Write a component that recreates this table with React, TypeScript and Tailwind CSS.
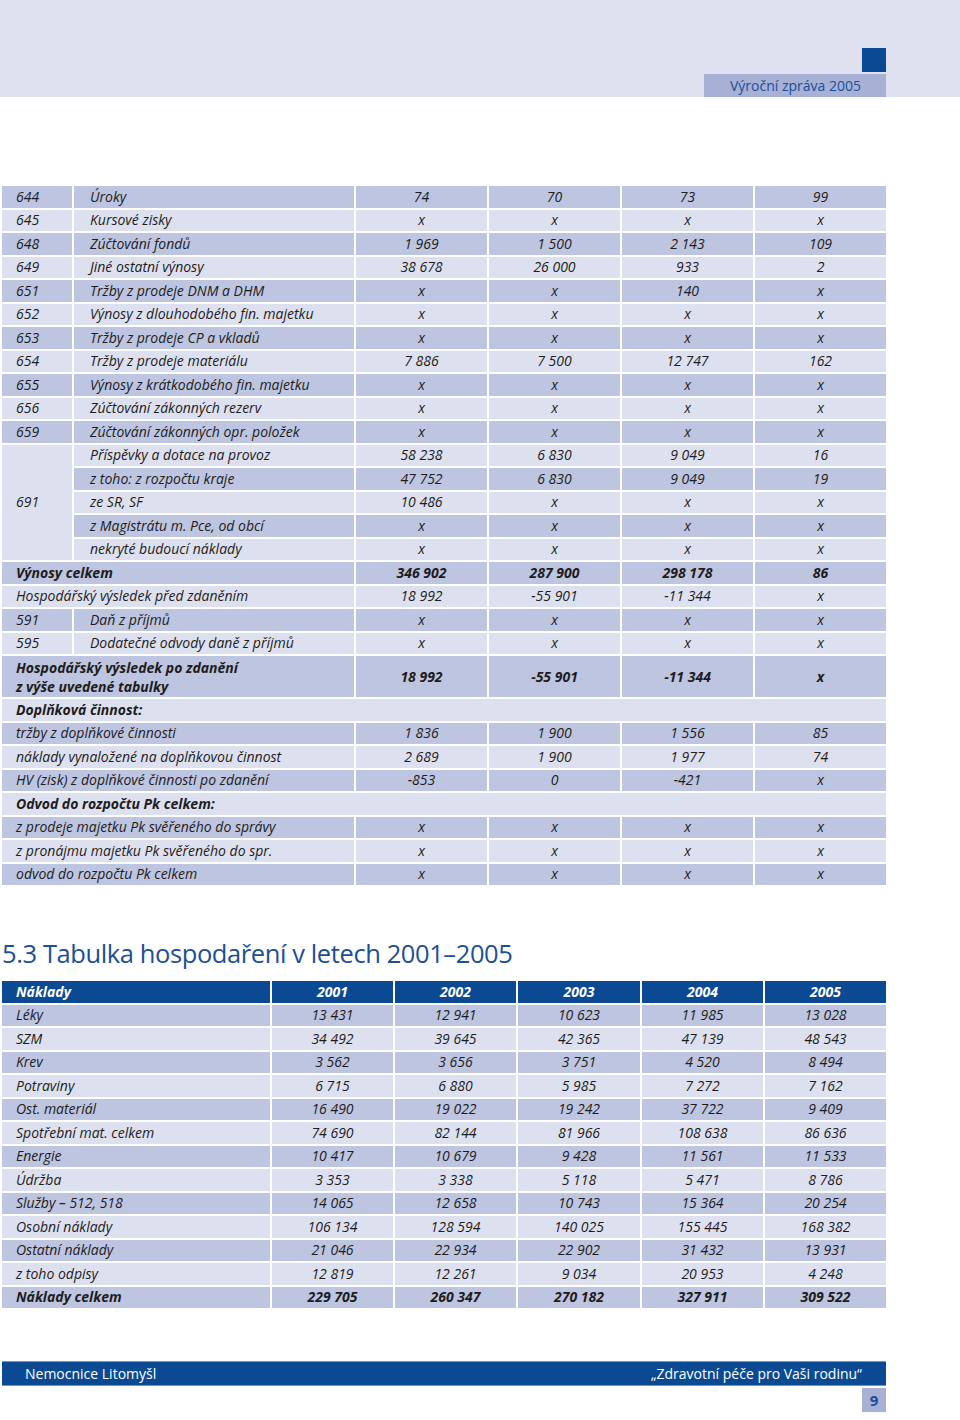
const FONT = "font-['Open_Sans',sans-serif]";

const DARK = "bg-[#bdc5e0]";
const LIGHT = "bg-[#dde1ef]";

const simple: [string, string, string, string, string, string][] = [
  ["644", "Úroky", "74", "70", "73", "99"],
  ["645", "Kursové zisky", "x", "x", "x", "x"],
  ["648", "Zúčtování fondů", "1 969", "1 500", "2 143", "109"],
  ["649", "Jiné ostatní výnosy", "38 678", "26 000", "933", "2"],
  ["651", "Tržby z prodeje DNM a DHM", "x", "x", "140", "x"],
  ["652", "Výnosy z dlouhodobého fin. majetku", "x", "x", "x", "x"],
  ["653", "Tržby z prodeje CP a vkladů", "x", "x", "x", "x"],
  ["654", "Tržby z prodeje materiálu", "7 886", "7 500", "12 747", "162"],
  ["655", "Výnosy z krátkodobého fin. majetku", "x", "x", "x", "x"],
  ["656", "Zúčtování zákonných rezerv", "x", "x", "x", "x"],
  ["659", "Zúčtování zákonných opr. položek", "x", "x", "x", "x"],
];

const group691: [string, string, string, string, string][] = [
  ["Příspěvky a dotace na provoz", "58 238", "6 830", "9 049", "16"],
  ["z toho: z rozpočtu kraje", "47 752", "6 830", "9 049", "19"],
  ["ze SR, SF", "10 486", "x", "x", "x"],
  ["z Magistrátu m. Pce, od obcí", "x", "x", "x", "x"],
  ["nekryté budoucí náklady", "x", "x", "x", "x"],
];

const costs: [string, string, string, string, string, string][] = [
  ["Léky", "13 431", "12 941", "10 623", "11 985", "13 028"],
  ["SZM", "34 492", "39 645", "42 365", "47 139", "48 543"],
  ["Krev", "3 562", "3 656", "3 751", "4 520", "8 494"],
  ["Potraviny", "6 715", "6 880", "5 985", "7 272", "7 162"],
  ["Ost. materiál", "16 490", "19 022", "19 242", "37 722", "9 409"],
  ["Spotřební mat. celkem", "74 690", "82 144", "81 966", "108 638", "86 636"],
  ["Energie", "10 417", "10 679", "9 428", "11 561", "11 533"],
  ["Údržba", "3 353", "3 338", "5 118", "5 471", "8 786"],
  ["Služby – 512, 518", "14 065", "12 658", "10 743", "15 364", "20 254"],
  ["Osobní náklady", "106 134", "128 594", "140 025", "155 445", "168 382"],
  ["Ostatní náklady", "21 046", "22 934", "22 902", "31 432", "13 931"],
  ["z toho odpisy", "12 819", "12 261", "9 034", "20 953", "4 248"],
];

function C({ children, dark, left, bold, className = "" }: { children?: React.ReactNode; dark?: boolean; left?: boolean; bold?: boolean; className?: string }) {
  return (
    <div
      className={`${dark ? DARK : LIGHT} flex items-center ${left ? "justify-start pl-[14px]" : "justify-center"} ${bold ? "font-bold" : ""} ${className}`}
    >
      {children}
    </div>
  );
}

function NumCells({ vals, dark, bold }: { vals: string[]; dark: boolean; bold?: boolean }) {
  return (
    <>
      {vals.map((v, i) => (
        <C key={i} dark={dark} bold={bold}>
          {v}
        </C>
      ))}
    </>
  );
}

function RevenueTable() {
  let row = 0;
  const dk = () => row++ % 2 === 0;
  return (
    <div className="ml-[2px] w-[884px] grid grid-cols-[70px_280px_131px_131px_131px_131px] grid-rows-[repeat(20,21.5px)_41px_repeat(8,21.5px)] gap-[2px] italic text-[14px] text-[#1f1c1d] leading-none">
      {simple.map(([code, name, ...vals]) => {
        const d = dk();
        return (
          <div key={code} className="contents">
            <C dark={d} left>{code}</C>
            <C dark={d} left className="pl-[16px]">{name}</C>
            <NumCells vals={vals} dark={d} />
          </div>
        );
      })}
      {group691.map(([name, ...vals], i) => {
        const d = dk();
        return (
          <div key={name} className="contents">
            {i === 0 && (
              <C left className="row-span-5">691</C>
            )}
            <C dark={d} left className="pl-[16px]">{name}</C>
            <NumCells vals={vals} dark={d} />
          </div>
        );
      })}
      <C dark left bold className="col-span-2">Výnosy celkem</C>
      <NumCells vals={["346 902", "287 900", "298 178", "86"]} dark bold />
      <C left className="col-span-2">Hospodářský výsledek před zdaněním</C>
      <NumCells vals={["18 992", "-55 901", "-11 344", "x"]} dark={false} />
      <C dark left>591</C>
      <C dark left className="pl-[16px]">Daň z příjmů</C>
      <NumCells vals={["x", "x", "x", "x"]} dark />
      <C left>595</C>
      <C left className="pl-[16px]">Dodatečné odvody daně z příjmů</C>
      <NumCells vals={["x", "x", "x", "x"]} dark={false} />
      <C dark left bold className="col-span-2 leading-[19px]">
        <span>
          Hospodářský výsledek po zdanění
          <br />
          z výše uvedené tabulky
        </span>
      </C>
      <NumCells vals={["18 992", "-55 901", "-11 344", "x"]} dark bold />
      <C left bold className="col-span-6">Doplňková činnost:</C>
      <C dark left className="col-span-2">tržby z doplňkové činnosti</C>
      <NumCells vals={["1 836", "1 900", "1 556", "85"]} dark />
      <C left className="col-span-2">náklady vynaložené na doplňkovou činnost</C>
      <NumCells vals={["2 689", "1 900", "1 977", "74"]} dark={false} />
      <C dark left className="col-span-2">HV (zisk) z doplňkové činnosti po zdanění</C>
      <NumCells vals={["-853", "0", "-421", "x"]} dark />
      <C left bold className="col-span-6">Odvod do rozpočtu Pk celkem:</C>
      <C dark left className="col-span-2">z prodeje majetku Pk svěřeného do správy</C>
      <NumCells vals={["x", "x", "x", "x"]} dark />
      <C left className="col-span-2">z pronájmu majetku Pk svěřeného do spr.</C>
      <NumCells vals={["x", "x", "x", "x"]} dark={false} />
      <C dark left className="col-span-2">odvod do rozpočtu Pk celkem</C>
      <NumCells vals={["x", "x", "x", "x"]} dark />
    </div>
  );
}

function CostTable() {
  return (
    <div className="ml-[2px] w-[884px] grid grid-cols-[268px_121px_121px_122px_121px_121px] auto-rows-[21.5px] gap-[2px] italic text-[14px] text-[#1f1c1d] leading-none">
      {["Náklady", "2001", "2002", "2003", "2004", "2005"].map((h, i) => (
        <div
          key={h}
          className={`bg-[#0b4a92] text-white font-bold flex items-center ${i === 0 ? "justify-start pl-[14px]" : "justify-center"}`}
        >
          {h}
        </div>
      ))}
      {costs.map(([name, ...vals], i) => (
        <div key={name} className="contents">
          <C dark={i % 2 === 0} left>{name}</C>
          <NumCells vals={vals} dark={i % 2 === 0} />
        </div>
      ))}
      <C dark left bold>Náklady celkem</C>
      <NumCells vals={["229 705", "260 347", "270 182", "327 911", "309 522"]} dark bold />
    </div>
  );
}

export default function App() {
  return (
    <div className={`w-[960px] h-[1420px] bg-white flex flex-col ${FONT}`}>
      <header className="h-[97px] bg-[#dfe1ee] flex flex-col items-end pr-[74px] pt-[48px]">
        <div className="w-[24px] h-[24px] bg-[#0b4a92]" />
        <div className="mt-[2px] w-[182px] h-[23px] bg-[#a7b1d6] flex items-center justify-end pr-[25px] text-[14px] text-[#1c4f96]">
          Výroční zpráva 2005
        </div>
      </header>

      <div className="mt-[89px]">
        <RevenueTable />
      </div>

      <h2 className="mt-[52px] ml-[2px] text-[25.5px] leading-[32px] text-[#1b4f96] tracking-[-0.4px]">
        5.3 Tabulka hospodaření v letech 2001–2005
      </h2>

      <div className="mt-[12px]">
        <CostTable />
      </div>

      <footer className="mt-[53px] ml-[2px] w-[884px]">
        <div className="h-[25px] bg-[#0b4a92] border-y border-[#6f95c9] flex items-center justify-between pl-[23px] pr-[24px] text-white text-[14px]">
          <span>Nemocnice Litomyšl</span>
          <span>„Zdravotní péče pro Vaši rodinu“</span>
        </div>
        <div className="flex justify-end mt-[2px]">
          <div className="w-[24px] h-[24px] bg-[#a7b1d6] flex items-center justify-center text-[15px] font-bold text-[#1c4f96]">
            9
          </div>
        </div>
      </footer>
    </div>
  );
}
